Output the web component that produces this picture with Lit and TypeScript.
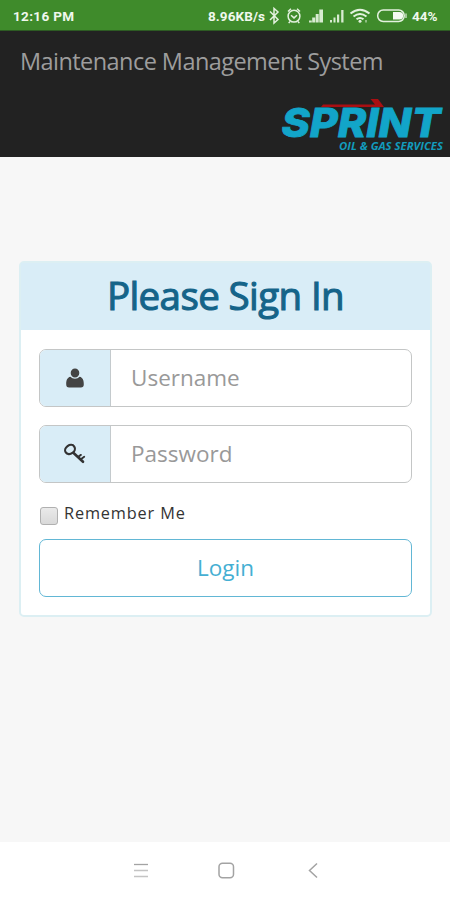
import { LitElement, html, css, svg } from "lit";
import { customElement, property } from "lit/decorators.js";

const userIcon = svg`<path d="M10 0.4a4.300 4.600 0 0 1 4.300 4.600 4.300 4.600 0 0 1-8.600 0A4.300 4.600 0 0 1 10 0.400z"/><path d="M5.400 8.800C2.200 9.400 1.200 12.500 1.200 16.200c0 2.200 1 3.300 2.900 3.300h11.800c1.900 0 2.900-1.100 2.900-3.300 0-3.700-1-6.800-4.200-7.400-1.200 1.300-2.800 2-4.600 2s-3.400-.7-4.600-2z"/>`;
const keyIcon = svg`<g fill="none" stroke="#333" stroke-linecap="round"><ellipse cx="5" cy="5.500" rx="5.200" ry="4.200" transform="rotate(-35 5 5.500)" stroke-width="2.200"/><path d="M8.600 9L18 17.800" stroke-width="2.600"/><path d="M13.600 12.500l2.300-1.600M16.200 15l3-2.200" stroke-width="1.900"/></g>`;

@customElement("status-bar")
class StatusBar extends LitElement {
  static styles = css`
    :host { display: flex; justify-content: space-between; height: 31px; background: #3f8b2b; padding: 0 11px 0 13px; box-sizing: border-box; font: 700 13.500px/32px Roboto, sans-serif; color: #f0f8ed; border-bottom: 1px solid #2d5b23; }
    .time { letter-spacing: .36px; }
    .right { display: flex; }
    .speed { width: 61px; letter-spacing: .1px; white-space: nowrap; }
    .icons { width: 143px; height: 30px; display: block; }
    .battery { width: 27px; white-space: nowrap; }
  `;
  render() {
    return html`<span class="time">12:16 PM</span>
      <div class="right"><span class="speed">8.96KB/s</span>
        <svg class="icons" viewBox="269 0 143 30" fill="none" stroke="#e3f1de" stroke-width="1.500">
          <path d="M270 11.500l8 8-4 3.500V8.500l4 3.500-8 8"/>
          <circle cx="294" cy="16.200" r="5.900"/><path d="M288 11.500l3-2.800M300 11.500l-3-2.800M290 21.500l-1.300 1.600M298 21.500l1.300 1.600M291 15.200l3 2.700 3-2.700"/>
          <g fill="#d8ebd1" stroke="none"><path d="M309 20.500h2.800v2H309zM312.200 17.500h3v5h-3zM315.700 14h3v8.500h-3zM319.300 9.500h3.700v13h-3.700z"/>
          <path d="M330 20h2v2.500h-2zM333.500 17.500h2v5h-2zM337 14.500h2.200v8H337zM341.200 10h2.300v12.500h-2.300z"/></g>
          <path d="M350.500 13.500q9.500-7.500 19 0M353.500 16.500q6.500-5 13 0M356.500 19.300q3.500-2.600 7 0" stroke-width="2"/><circle cx="360" cy="21.300" r="1.500" fill="#e3f1de" stroke="none"/><path d="M366 20v2.500" stroke-width="1"/>
          <rect x="377.700" y="10" width="26.500" height="11.500" rx="5.500" stroke-width="1.500"/><path d="M393 12h6.500a3.700 3.700 0 0 1 0 7.400H393z" fill="#f5fbf3" stroke="none"/><path d="M406 13.500v4.500" stroke-width="1.200"/>
        </svg>
        <span class="battery">44%</span></div>`;
  }
}

@customElement("app-header")
class AppHeader extends LitElement {
  static styles = css`
    :host { display: flex; flex-direction: column; height: 125.500px; background: #222; box-sizing: border-box; padding: 15px 5px 0 20px; }
    .title { font: 400 23.500px/30px "Open Sans", "Noto Sans", sans-serif; letter-spacing: -.56px; color: #9d9d9d; white-space: nowrap; }
    .logo { align-self: flex-end; width: 164px; height: 56px; margin-top: 20px; display: block; overflow: visible; }
    .word { font: italic 800 40px Inter, "DejaVu Sans", sans-serif; fill: #12a5c9; stroke: #12a5c9; stroke-width: .8px; }
    .tag { font: italic 700 10.500px "Open Sans", sans-serif; fill: #129bbd; }
  `;
  render() {
    return html`<div class="title">Maintenance Management System</div>
      <svg class="logo" viewBox="281 96 164 56">
        <text class="word" x="281.500" y="137.300" textLength="159" lengthAdjust="spacingAndGlyphs">SPRINT</text>
        <path d="M321 107l2-2.500h52l-4.500-5.500h7.500l6 8z" fill="#a90f12"/>
        <text class="tag" x="339" y="149.500" textLength="104" lengthAdjust="spacingAndGlyphs">OIL &amp; GAS SERVICES</text>
      </svg>`;
  }
}

@customElement("icon-field")
class IconField extends LitElement {
  @property() kind = "user";
  @property() placeholder = "";
  static styles = css`
    :host { display: flex; height: 57.500px; box-sizing: border-box; border: 1px solid #c4c6c6; border-radius: 7px; background: #fff; overflow: hidden; }
    .addon { width: 70px; flex: none; border-right: 1px solid #c4cacd; background: #d9edf7; display: flex; align-items: center; justify-content: center; }
    .icon { width: 20px; height: 20px; fill: #444; overflow: visible; }
    input { flex: 1; min-width: 0; border: 0; outline: 0; background: none; padding: 0 20px; font: 400 22.500px "Open Sans", "Noto Sans", sans-serif; color: #555; }
    input::placeholder { color: #999; opacity: 1; }
  `;
  render() {
    return html`<span class="addon"><svg class="icon" viewBox="0 0 20 20">${this.kind === "user" ? userIcon : keyIcon}</svg></span>
      <input type="text" placeholder=${this.placeholder}>`;
  }
}

@customElement("sign-in-panel")
class SignInPanel extends LitElement {
  static styles = css`
    :host { display: block; height: 356px; box-sizing: border-box; border: 2px solid #dceff3; border-radius: 5px; background: #fff; }
    .heading { height: 67px; margin: 0; background: #d9edf7; text-align: center; font: 400 38.500px/64px "Open Sans", "Noto Sans", sans-serif; letter-spacing: -.6px; color: #156489; -webkit-text-stroke: 1.100px #156489; }
    .body { display: flex; flex-direction: column; padding: 19px 18px 0; }
    .second { margin-top: 18.500px; }
    .remember { display: flex; align-items: center; height: 24px; margin-top: 18.500px; font: 400 16.300px/24px "Open Sans", "Noto Sans", sans-serif; letter-spacing: .86px; color: #333; }
    .box { appearance: none; width: 18px; height: 18px; margin: 6px 6px 0 1px; border: 1px solid #b0b0b0; border-radius: 3px; background: linear-gradient(#eaeaea, #d9d9d9); }
    .login { height: 58px; margin-top: 13.500px; border: 1px solid #62b7d5; border-radius: 7px; background: #fff; color: #45afd3; font: 400 22.500px "Open Sans", "Noto Sans", sans-serif; padding: 0 0 1px; }
  `;
  render() {
    return html`<h1 class="heading">Please Sign In</h1>
      <div class="body">
        <icon-field kind="user" placeholder="Username"></icon-field>
        <icon-field class="second" kind="key" placeholder="Password"></icon-field>
        <label class="remember"><input class="box" type="checkbox"><span>Remember Me</span></label>
        <button class="login">Login</button>
      </div>`;
  }
}

@customElement("app-root")
class AppRoot extends LitElement {
  static styles = css`
    :host { display: flex; flex-direction: column; width: 450px; height: 900px; background: #f7f7f7; overflow: hidden; }
    main { flex: 1; padding: 104.500px 18px 0 19px; }
    .nav { height: 58px; background: #fff; }
    .nav svg { display: block; width: 450px; height: 58px; }
  `;
  render() {
    return html`<status-bar></status-bar><app-header></app-header>
      <main><sign-in-panel></sign-in-panel></main>
      <div class="nav"><svg viewBox="0 842 450 58" fill="none" stroke="#a3a3a3" stroke-width="1.300">
        <path d="M134 864.500h14"/><path d="M134 870.500h14M134 876.500h14" stroke="#c4c4c4" stroke-width="1.600"/>
        <rect x="219" y="863.300" width="14.500" height="14.500" rx="3.500" stroke-width="1.500"/>
        <path d="M317 863.500l-7.500 7 7.500 7" stroke-width="1.500"/>
      </svg></div>`;
  }
}
